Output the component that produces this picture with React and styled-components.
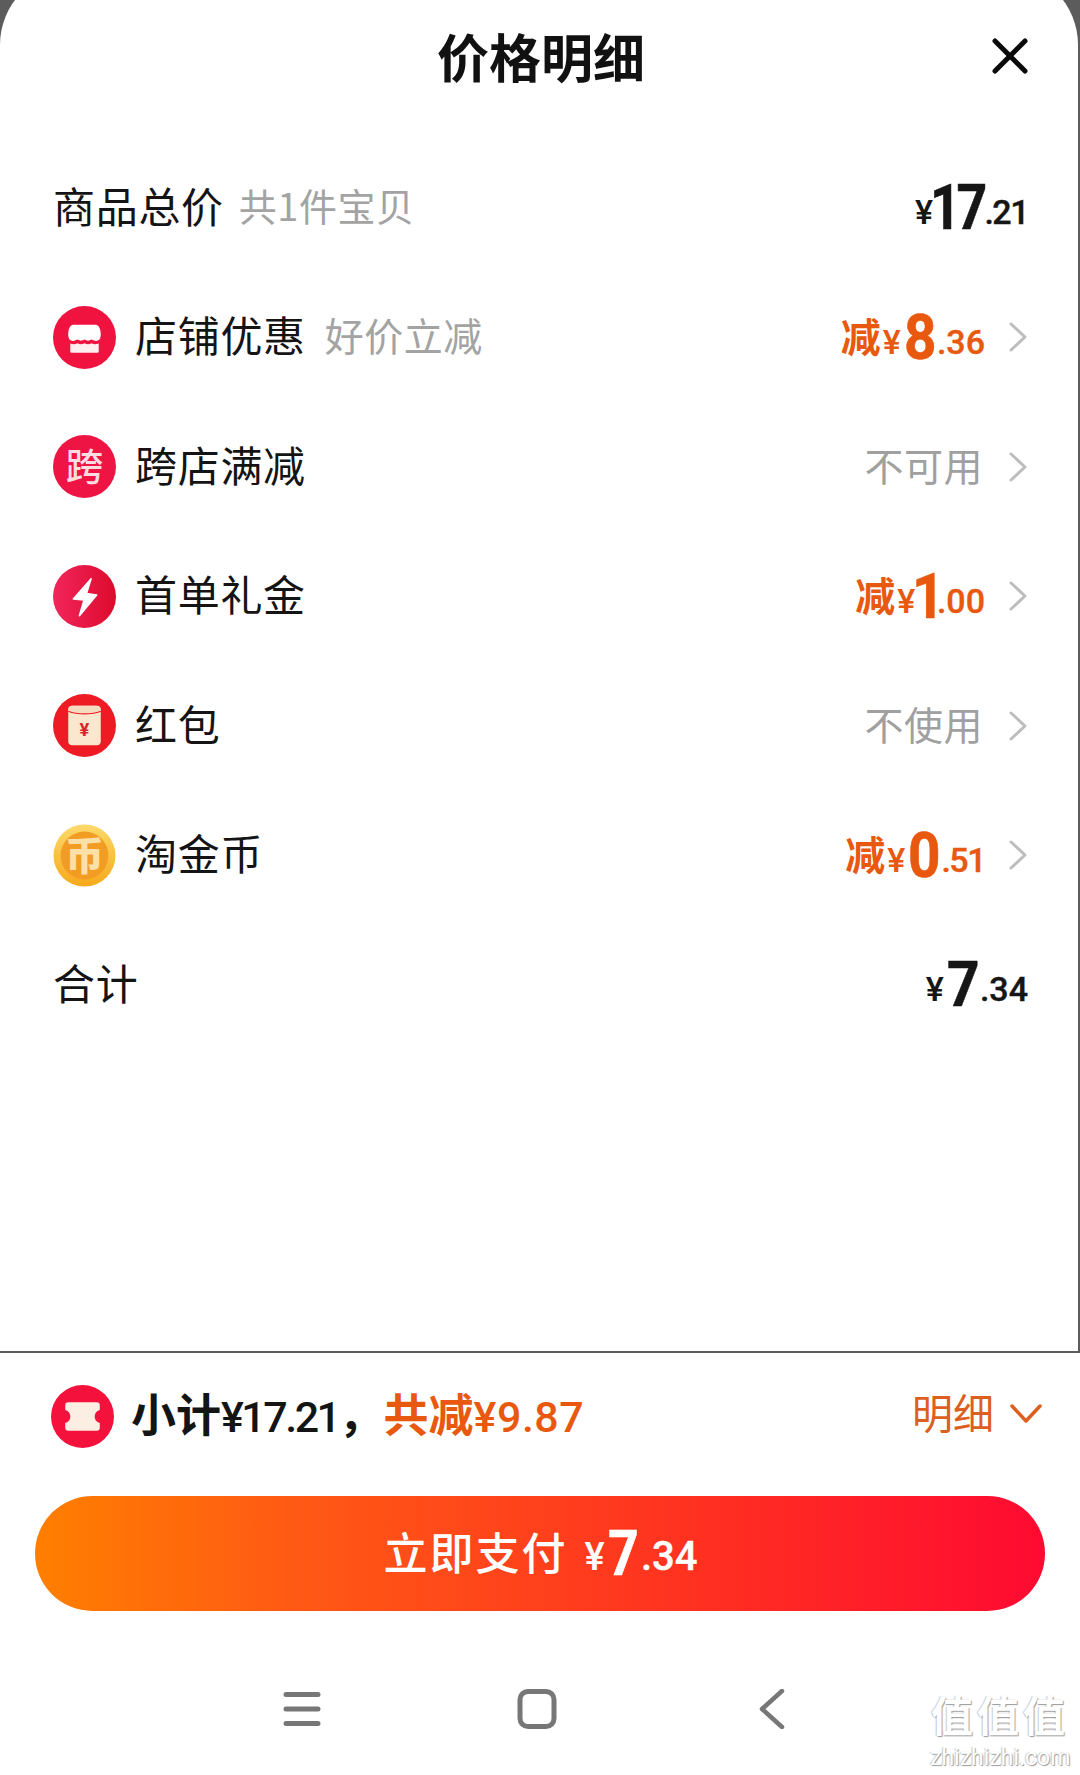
import React from 'react';
import styled, { createGlobalStyle } from 'styled-components';

const Global = createGlobalStyle`
  html, body { margin: 0; padding: 0; background: #fff; }
  body { font-family: "Noto Sans CJK SC", "Noto Sans", sans-serif; }
  * { box-sizing: border-box; }
`;

const Page = styled.div`
  position: relative;
  width: 1080px;
  height: 1775px;
  overflow: hidden;
  background: #fff;
`;

const Backdrop = styled.div`
  height: 1353px;
  padding: 0 2px 2px 0;
  background: #5c5c5c;
  overflow: hidden;
`;

const Sheet = styled.div`
  margin-top: -30px;
  height: 1381px;
  padding-top: 30px;
  background: #fff;
  border-radius: 75px 75px 0 0;
`;

const Header = styled.div`
  display: grid;
  grid-template-columns: 1fr auto 1fr;
  align-items: center;
  height: 114px;
  margin-bottom: 29px;
  padding: 0 50px 0 54px;
`;

const Title = styled.h1`
  grid-column: 2;
  margin: 0 0 3px;
  font-size: 52px;
  line-height: 1;
  font-weight: 700;
  color: #111;
`;

const CloseIcon = styled.svg`
  justify-self: end;
  width: 36px;
  height: 36px;
  margin-top: -3px;
`;

const Row = styled.div`
  display: flex;
  align-items: center;
  height: 129.5px;
  padding: 0 50px 0 53px;
`;

const IconBox = styled.svg`
  flex: none;
  width: 63px;
  height: 63px;
  margin-right: 19px;
`;

const Label = styled.span`
  padding-bottom: 7px;
  font-size: 42px;
  letter-spacing: 0.7px;
  color: #141414;
`;

const Hint = styled.span`
  margin-left: ${p => (p.$wide ? '19px' : '15px')};
  padding-bottom: 7px;
  font-size: ${p => (p.$wide ? '39px' : '38px')};
  letter-spacing: 0.5px;
  color: #a3a3a3;
`;

const Right = styled.div`
  margin-left: auto;
  display: flex;
  align-items: center;
`;

const Chevron = styled.svg`
  width: 19px;
  height: 30px;
  margin-left: 24px;
`;

const Muted = styled.span`
  margin-right: 2px;
  padding-bottom: 6px;
  font-size: 39px;
  letter-spacing: 0.5px;
  color: #a0a0a0;
`;

const Price = styled.span`
  display: inline-block;
  white-space: nowrap;
  font-family: Roboto, "Noto Sans CJK SC", sans-serif;
  font-weight: 700;
  line-height: 1;
  color: ${p => (p.$off ? '#e8590f' : '#161616')};
`;

const Cut = styled.span`
  font-family: "Noto Sans CJK SC", sans-serif;
  font-size: 40px;
  font-weight: 700;
  margin-right: 2px;
  vertical-align: 7px;
`;

const Yen = styled.span`
  font-size: ${p => (p.$large ? '38px' : '34px')};
  font-weight: 500;
  margin-right: 3px;
  vertical-align: 5px;
`;

// the reference digits are condensed and no narrow face is installed,
// so squeeze Roboto and hand the freed width back through the margins
const Big = styled.span`
  display: inline-block;
  font-size: 63px;
  letter-spacing: ${p => p.$spacing || 0}px;
  transform: scaleX(${p => p.$squeeze || 0.9});
  transform-origin: left center;
  margin-left: ${p => p.$lead || 0}px;
  margin-right: ${p => p.$trail}px;
  -webkit-text-stroke: 0.6px currentColor;
`;

const Cents = styled.span`
  font-size: ${p => (p.$large ? '40px' : '34px')};
  font-weight: 500;
  letter-spacing: ${p => (p.$tight ? '-1.5px' : '0')};
  vertical-align: 5px;
  -webkit-text-stroke: 0.4px currentColor;
`;

const Summary = styled.div`
  display: flex;
  align-items: center;
  height: 126px;
  padding: 0 38px 0 51px;
`;

const SummaryIcon = styled(IconBox)`
  margin-right: 17px;
`;

const SummaryText = styled.span`
  padding-bottom: 7px;
  font-family: "Noto Sans CJK SC", sans-serif;
  font-size: 45px;
  font-weight: 700;
  color: #141414;
  white-space: pre;
`;

const SummaryOff = styled.span`
  color: #e8590f;
`;

const SummaryNum = styled.span`
  font-family: Roboto, sans-serif;
  font-size: 43px;
  font-weight: 500;
  letter-spacing: ${p => (p.$tight ? '-2.5px' : '0.5px')};
`;

const Detail = styled.div`
  margin-left: auto;
  padding-bottom: 4px;
  display: flex;
  align-items: center;
  gap: 16px;
  font-size: 41px;
  color: #dc5f1f;
`;

const DetailText = styled.span`
  padding-bottom: 7px;
`;

const PayButton = styled.button`
  display: flex;
  align-items: center;
  justify-content: center;
  width: 1010px;
  height: 115px;
  margin: 17px 0 0 35px;
  padding: 0 0 0 1px;
  border: 0;
  border-radius: 58px;
  background: linear-gradient(90deg, #ff7f00 0%, #ff5a14 25%, #ff2c22 70%, #ff0a32 100%);
  color: #fff;
  font-family: "Noto Sans CJK SC", sans-serif;
  font-size: 44px;
  font-weight: 500;
  letter-spacing: 2px;
`;

const PayLabel = styled.span`
  padding-bottom: 6px;
`;

const PayPrice = styled(Price)`
  margin-left: 17px;
  color: #fff;
  letter-spacing: 0;
`;

const Nav = styled.nav`
  display: flex;
  justify-content: center;
  align-items: center;
  gap: 195px;
  height: 40px;
  margin-top: 78px;
  padding-right: 6px;
`;

const NavIcon = styled.svg`
  flex: none;
  width: 40px;
  height: 40px;
`;

const Watermark = styled.div`
  position: absolute;
  right: 10px;
  bottom: 4px;
  width: 140px;
  text-align: center;
  color: #fff;
  text-shadow: 1px 1px 1px #9a9a9a, -1px 0 1px #c8c8c8;
`;

const WatermarkTop = styled.div`
  margin-bottom: 10px;
  font-size: 42px;
  line-height: 42px;
  letter-spacing: 4px;
  font-weight: 700;
`;

const WatermarkUrl = styled.div`
  font-family: Roboto, sans-serif;
  font-size: 23px;
  line-height: 26px;
`;

const ShopIcon = () => (
  <IconBox viewBox="0 0 62 62">
    <circle cx="31" cy="31" r="31" fill="#f01340" />
    <path d="M20 18.500h22c3 0 5 4 5 9.500 0 3-1 5-2 5.500-2.500 1.500-4 1-7-.5-2.500 1.500-4.500 1.500-7 0-2.500 1.500-4.500 1.500-7 0-3 1.500-4.500 2-7 .5-1-.5-2-2.500-2-5.500 0-5.500 2-9.500 5-9.500z" fill="#fff" />
    <path d="M17 37c2.500 1 5 1 7-.3 2.500 1.300 4.500 1.300 7 0 2.500 1.300 4.500 1.300 7 0 2 1.300 4.500 1.300 7 .3v7.500c0 1-.5 1.500-1.500 1.500h-25c-1 0-1.500-.5-1.500-1.500z" fill="#ffeef0" />
  </IconBox>
);

const CrossIcon = () => (
  <IconBox viewBox="0 0 62 62">
    <circle cx="31" cy="31" r="31" fill="#ee1443" />
    <text x="31" y="44" textAnchor="middle" fontSize="37" fontWeight="500" fill="#ffdbe2" fontFamily="Noto Sans CJK SC">跨</text>
  </IconBox>
);

const BoltIcon = () => (
  <IconBox viewBox="0 0 62 62">
    <defs>
      <linearGradient id="bolt" x1="0" y1="0" x2="1" y2="0">
        <stop offset="0" stopColor="#f2265c" />
        <stop offset="1" stopColor="#dc0a2c" />
      </linearGradient>
    </defs>
    <circle cx="31" cy="31" r="31" fill="url(#bolt)" />
    <path d="M37.500 13.500 20 33.500l10.500 1L26 50l17-20.500-10-1.500z" fill="#fff" stroke="#fff" strokeWidth="1.500" strokeLinejoin="round" />
  </IconBox>
);

const EnvelopeIcon = () => (
  <IconBox viewBox="0 0 62 62">
    <circle cx="31" cy="31" r="31" fill="#ee1b24" />
    <rect x="15" y="11.500" width="32" height="39" rx="4" fill="#fbe7cd" />
    <path d="M15 15.500c0-2.500 2-4 4-4h24c2 0 4 1.500 4 4v1c-9 3.500-23 3.500-32 0z" fill="#f5dcc0" />
    <path d="M15 17c9 3.500 23 3.500 32 0" stroke="#ee1b24" strokeWidth="1.200" fill="none" />
    <text x="31" y="41" textAnchor="middle" fontSize="18" fontWeight="700" fill="#d8252b" fontFamily="Roboto">¥</text>
  </IconBox>
);

const CoinIcon = () => (
  <IconBox viewBox="0 0 62 62">
    <defs>
      <linearGradient id="coin" x1="0" y1="0" x2="0" y2="1">
        <stop offset="0" stopColor="#fdd96a" />
        <stop offset="1" stopColor="#f6a91b" />
      </linearGradient>
    </defs>
    <circle cx="31" cy="31" r="30.500" fill="url(#coin)" />
    <circle cx="31" cy="31" r="23.500" fill="#f29c24" />
    <text x="31" y="45" textAnchor="middle" fontSize="38" fontWeight="900" fill="#fde0a8" fontFamily="Noto Sans CJK SC">币</text>
  </IconBox>
);

const TicketIcon = () => (
  <SummaryIcon viewBox="0 0 62 62">
    <circle cx="31" cy="31" r="31" fill="#f4123d" />
    <path d="M17 17h28c2 0 3 1 3 3v4.500c-3.500 1.200-5 3.500-5 6.500s1.500 5.300 5 6.500V42c0 2-1 3-3 3H17c-2 0-3-1-3-3v-4.500c3.500-1.200 5-3.500 5-6.500s-1.500-5.300-5-6.500V20c0-2 1-3 3-3z" fill="#fdeee4" />
  </SummaryIcon>
);

const RowArrow = () => (
  <Chevron viewBox="0 0 19 30">
    <path d="M2 2l14 13L2 28" fill="none" stroke="#bdbdbd" strokeWidth="3" strokeLinecap="round" strokeLinejoin="round" />
  </Chevron>
);

// Roboto digits are tabular: a lone 1 carries spare room on both sides
const Amount = ({ off, whole, cents, squeeze, spacing, trail = -3, snug }) => (
  <Price $off={off}>
    {off && <Cut>减</Cut>}
    <Yen>¥</Yen>
    <Big $spacing={spacing} $squeeze={squeeze} $lead={whole[0] === '1' ? -6 : 0} $trail={trail}>{whole}</Big>
    <Cents $tight={snug}>.{cents}</Cents>
  </Price>
);

const rows = [
  { icon: <ShopIcon />, label: '店铺优惠', hint: '好价立减', whole: '8', cents: '36' },
  { icon: <CrossIcon />, label: '跨店满减', muted: '不可用' },
  { icon: <BoltIcon />, label: '首单礼金', whole: '1', cents: '00', spacing: -9, trail: -2.5 },
  { icon: <EnvelopeIcon />, label: '红包', muted: '不使用' },
  { icon: <CoinIcon />, label: '淘金币', whole: '0', cents: '51', snug: true },
];

export default function App() {
  return (
    <Page>
      <Global />
      <Backdrop>
        <Sheet>
          <Header>
            <Title>价格明细</Title>
            <CloseIcon viewBox="0 0 36 36">
              <path d="M3 3l30 30M33 3L3 33" stroke="#0a0a0a" strokeWidth="5" strokeLinecap="round" />
            </CloseIcon>
          </Header>

          <Row>
            <Label>商品总价</Label>
            <Hint>共1件宝贝</Hint>
            <Right>
              <Amount whole="17" cents="21" squeeze={0.85} spacing={-5} trail={-8} snug />
            </Right>
          </Row>

          {rows.map(r => (
            <Row key={r.label}>
              {r.icon}
              <Label>{r.label}</Label>
              {r.hint && <Hint $wide>{r.hint}</Hint>}
              <Right>
                {r.muted
                  ? <Muted>{r.muted}</Muted>
                  : <Amount off whole={r.whole} cents={r.cents} spacing={r.spacing} trail={r.trail} snug={r.snug} />}
                <RowArrow />
              </Right>
            </Row>
          ))}

          <Row>
            <Label>合计</Label>
            <Right>
              <Amount whole="7" cents="34" />
            </Right>
          </Row>
        </Sheet>
      </Backdrop>

      <Summary>
        <TicketIcon />
        <SummaryText>
          小计<SummaryNum $tight>¥17.21</SummaryNum>，<SummaryOff>共减<SummaryNum>¥9.87</SummaryNum></SummaryOff>
        </SummaryText>
        <Detail>
          <DetailText>明细</DetailText>
          <svg width="32" height="20" viewBox="0 0 32 20">
            <path d="M2 2l14 15L30 2" fill="none" stroke="#dc5f1f" strokeWidth="3.500" strokeLinecap="round" strokeLinejoin="round" />
          </svg>
        </Detail>
      </Summary>

      <PayButton>
        <PayLabel>立即支付</PayLabel>
        <PayPrice>
          <Yen $large>¥</Yen>
          <Big $squeeze={0.85} $trail={-3}>7</Big>
          <Cents $large>.34</Cents>
        </PayPrice>
      </PayButton>

      <Nav>
        <NavIcon viewBox="0 0 40 40">
          <path d="M4 5.500h32M4 20h32M4 34.500h32" stroke="#777" strokeWidth="5" strokeLinecap="round" />
        </NavIcon>
        <NavIcon viewBox="0 0 40 40">
          <rect x="3" y="2.500" width="34" height="35" rx="8" fill="none" stroke="#777" strokeWidth="5" />
        </NavIcon>
        <NavIcon viewBox="0 0 40 40">
          <path d="M30 2 10 20l20 18" fill="none" stroke="#777" strokeWidth="4.500" strokeLinecap="round" strokeLinejoin="round" />
        </NavIcon>
      </Nav>

      <Watermark>
        <WatermarkTop>值值值</WatermarkTop>
        <WatermarkUrl>zhizhizhi.com</WatermarkUrl>
      </Watermark>
    </Page>
  );
}
